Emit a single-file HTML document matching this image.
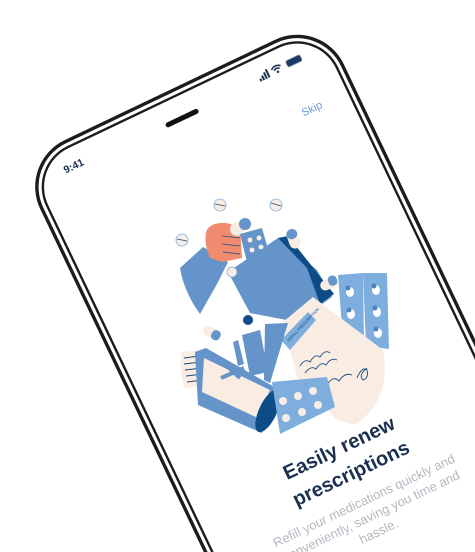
<!DOCTYPE html>
<html><head><meta charset="utf-8"><style>
html,body{margin:0;padding:0;background:#fff;width:475px;height:552px;overflow:hidden;position:relative;font-family:"Liberation Sans",sans-serif}
#clip{position:absolute;left:0;top:0;width:475px;height:552px;overflow:hidden}
#rot{position:absolute;left:0;top:0;width:0;height:0;transform-origin:0 0;transform:rotate(-25.5deg)}
.a{position:absolute}
</style></head><body><div id="clip">
<svg class="a" style="left:0;top:0" width="475" height="552" viewBox="0 0 475 552">
<path d="M180,268 L203,247 L228,262 L217,284 L200,314 Q184,292 180,268Z" fill="#6494c9"/>
<path d="M206,232 Q210,222 226,223 L240,226 L242,258 L222,262 L210,258 Q204,245 206,232Z" fill="#f28c6e"/>
<path d="M222,236 L240,238 M222,244 L240,246 M223,252 L240,254" stroke="#1b4a80" stroke-width="0.8"/>
<circle cx="237" cy="229" r="7" fill="#f9ece3"/>
<circle cx="245" cy="224" r="6" fill="#6494c9"/>
<path d="M240,234 L262,228 L270,256 L247,262Z" fill="#6494c9"/>
<circle cx="250" cy="240" r="2.5" fill="#f9ece3"/><circle cx="259" cy="238" r="2.5" fill="#f9ece3"/>
<circle cx="252" cy="250" r="2.5" fill="#f9ece3"/><circle cx="261" cy="247" r="2.5" fill="#f9ece3"/>
<path d="M228,272 L278,238 L317,270 L332,297 L297,322 L250,313Z" fill="#6494c9"/>
<path d="M278,238 L288,236 L334,294 L320,304 L307,268Z" fill="#0d4c86"/>
<path d="M338,275 L363,273 L364,344 L343,340Z" fill="#7eaede"/>
<path d="M363,273 L387,273 L389,349 L366,346Z" fill="#7eaede"/>
<g fill="#fff"><ellipse cx="350" cy="292" rx="4" ry="5"/><ellipse cx="351" cy="314" rx="4" ry="5"/><ellipse cx="376" cy="290" rx="4" ry="5"/><ellipse cx="377" cy="312" rx="4" ry="5"/><ellipse cx="378" cy="333" rx="4" ry="5"/></g>
<g fill="#4f83c0"><circle cx="348" cy="288" r="2.5"/><circle cx="349" cy="310" r="2.5"/><circle cx="374" cy="286" r="2.5"/><circle cx="375" cy="308" r="2.5"/><circle cx="376" cy="329" r="2.5"/></g>
<rect x="320" y="279" width="18" height="10" rx="5" fill="#f9ece3" transform="rotate(-20 329 284)"/>
<rect x="329" y="277" width="9" height="10" rx="4" fill="#6494c9" transform="rotate(-20 329 284)"/>
<path d="M283,322 L313,297 L383,350 Q392,400 355,425 L337,420 L297,377Z" fill="#f9ece3"/>
<path d="M281,340 L308,312 L316,320 L290,350Z" fill="#7eaede"/>
<text x="0" y="0" font-size="4" fill="#1b4a80" transform="translate(289,342) rotate(-47)">REFILL PRESCRIPTION</text>
<path d="M300,366 q5,-8 10,-4 q5,-9 10,-5 q5,-8 10,-4 M305,373 q6,-8 11,-4 q5,-8 10,-4 q5,-8 11,-5 M327,385 q6,-10 12,-4 q6,-9 13,-6 M357,378 q5,-12 10,-8 q2,8 -4,10 q-5,-5 4,-12" fill="none" stroke="#1b4a80" stroke-width="0.9"/>
<circle cx="248" cy="320" r="5" fill="#0d4c86"/>
<path d="M233,342 L238,340 L244,364 L238,366Z" fill="#6494c9"/>
<path d="M242,335 L260,330 L268,372 L250,376Z" fill="#6494c9"/>
<path d="M265,324 L288,323 L270,383 L264,380Z" fill="#6494c9"/>
<rect x="203" y="328" width="18" height="10" rx="5" fill="#f9ece3" transform="rotate(30 212 333)"/>
<rect x="212" y="328" width="9" height="10" rx="4" fill="#6494c9" transform="rotate(30 212 333)"/>
<path d="M182,352 L200,350 L206,386 L185,388 Q178,370 182,352Z" fill="#f9ece3"/>
<path d="M184,358 L199,356 M184,364 L201,362 M185,370 L202,368 M186,376 L203,374 M187,382 L204,380" stroke="#1b4a80" stroke-width="1"/>
<path d="M195,352 L206,348 L278,389 L262,433 L198,405Z" fill="#6494c9"/>
<path d="M204,358 L270,390 L258,418 L202,392Z" fill="#f9ece3"/>
<path d="M227,366 L240,378 M221,378 L244,368" stroke="#6494c9" stroke-width="4"/>
<ellipse cx="268" cy="411" rx="9" ry="23" fill="#0d4c86" transform="rotate(25 268 411)"/>
<path d="M272,382 L327,377 L335,407 L280,434Z" fill="#7eaede"/>
<g fill="#f9ece3"><circle cx="283" cy="401" r="4"/><circle cx="298" cy="396" r="4"/><circle cx="313" cy="391" r="4"/><circle cx="286" cy="418" r="4"/><circle cx="302" cy="412" r="4"/><circle cx="318" cy="405" r="4"/></g>
<g fill="#f9ece3" stroke="#7eaede" stroke-width="0.8"><circle cx="220" cy="205" r="6"/><circle cx="276" cy="205" r="6"/><circle cx="182" cy="240" r="6"/><circle cx="232" cy="272" r="5"/></g>
<path d="M215,204 L225,206 M271,203 L281,206 M177,239 L187,241" stroke="#1b4a80" stroke-width="0.8"/>
<rect x="288" y="229" width="11" height="20" rx="5.5" fill="#f9ece3" transform="rotate(-20 293 239)"/>
<rect x="288" y="229" width="11" height="10" rx="5" fill="#6494c9" transform="rotate(-20 293 239)"/>
</svg>
<div id="rot">
<svg class="a" style="left:-60px;top:148px;overflow:visible" width="350" height="800">
<rect x="8" y="8" width="333" height="760" rx="50" fill="none" stroke="#1c1c1a" stroke-width="3.4"/>
<rect x="14" y="14" width="321" height="748" rx="44" fill="none" stroke="#1c1c1a" stroke-width="2.4"/>
<rect x="155.5" y="34.5" width="36" height="5" rx="2.5" fill="#111"/>
</svg>
<div class="a" style="left:-20px;top:176px;width:30px;text-align:center;font-size:10.5px;font-weight:bold;color:#1b2f4f">9:41</div>
<svg class="a" style="left:200px;top:176px" width="52" height="12">
<rect x="0" y="7" width="2" height="3" fill="#1b2f4f"/><rect x="3" y="5" width="2" height="5" fill="#1b2f4f"/><rect x="6" y="3" width="2" height="7" fill="#1b2f4f"/><rect x="9" y="1" width="2" height="9" fill="#1b2f4f"/>
<path d="M15,4 Q20,0 25,4 M17,6 Q20,3.5 23,6" fill="none" stroke="#1b2f4f" stroke-width="1.5"/><circle cx="20" cy="8.5" r="1.2" fill="#1b2f4f"/>
<rect x="31" y="2" width="16" height="7" rx="2" fill="#1b3a63" stroke="#9aaabb" stroke-width="0.8"/>
</svg>
<div class="a" style="left:224px;top:227px;font-size:11px;color:#6a9ad6">Skip</div>
<div class="a" style="left:-17px;top:537px;width:260px;text-align:center;font-size:20px;line-height:28px;font-weight:bold;color:#1b2f4f">Easily renew<br>prescriptions</div>
<div class="a" style="left:2px;top:600px;width:222px;text-align:center;font-size:13px;line-height:17px;color:#b3b8c0">Refill your medications quickly and conveniently, saving you time and hassle.</div>
</div>
</div></body></html>
